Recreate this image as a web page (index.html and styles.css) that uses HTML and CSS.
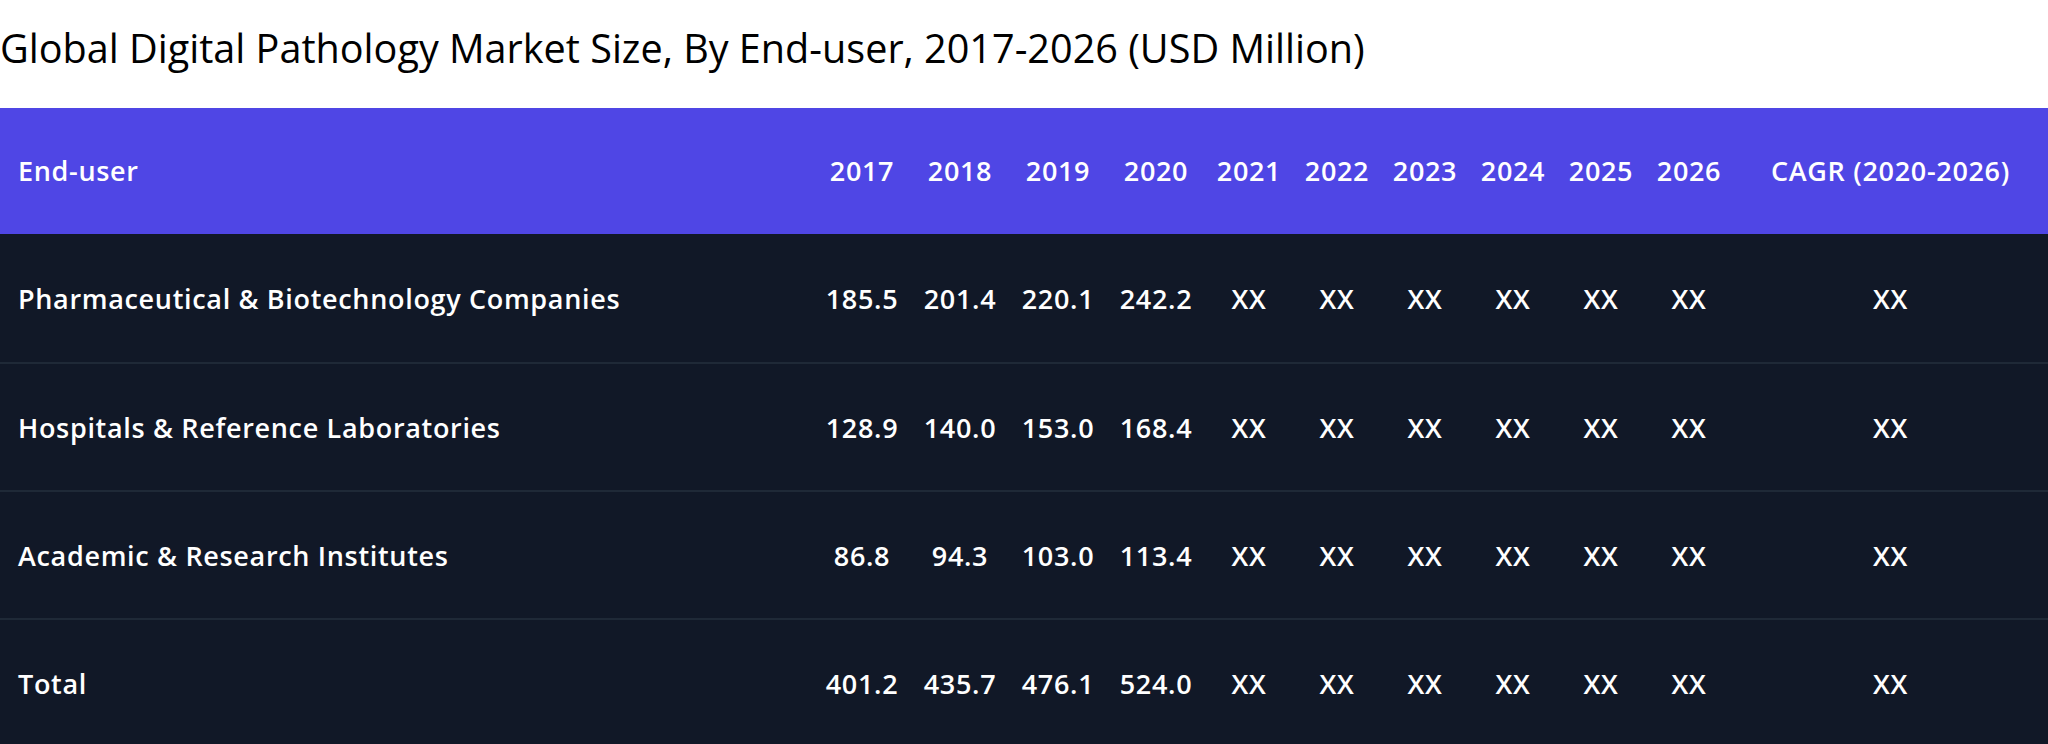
FILE: index.html
```html
<!DOCTYPE html>
<html lang="en">
<head>
<meta charset="utf-8">
<title>Global Digital Pathology Market Size</title>
<link rel="stylesheet" href="styles.css">
</head>
<body>
<h1 class="title">Global Digital Pathology Market Size, By End-user, 2017-2026 (USD Million)</h1>
<div class="table">
  <div class="row head">
    <div class="cell label">End-user</div>
    <div class="cell">2017</div><div class="cell">2018</div><div class="cell">2019</div><div class="cell">2020</div>
    <div class="cell">2021</div><div class="cell">2022</div><div class="cell">2023</div><div class="cell">2024</div><div class="cell">2025</div><div class="cell">2026</div>
    <div class="cell">CAGR (2020-2026)</div>
  </div>
  <div class="body">
    <div class="row">
      <div class="cell label">Pharmaceutical &amp; Biotechnology Companies</div>
      <div class="cell">185.5</div><div class="cell">201.4</div><div class="cell">220.1</div><div class="cell">242.2</div>
      <div class="cell">XX</div><div class="cell">XX</div><div class="cell">XX</div><div class="cell">XX</div><div class="cell">XX</div><div class="cell">XX</div>
      <div class="cell">XX</div>
    </div>
    <div class="row">
      <div class="cell label">Hospitals &amp; Reference Laboratories</div>
      <div class="cell">128.9</div><div class="cell">140.0</div><div class="cell">153.0</div><div class="cell">168.4</div>
      <div class="cell">XX</div><div class="cell">XX</div><div class="cell">XX</div><div class="cell">XX</div><div class="cell">XX</div><div class="cell">XX</div>
      <div class="cell">XX</div>
    </div>
    <div class="row">
      <div class="cell label">Academic &amp; Research Institutes</div>
      <div class="cell">86.8</div><div class="cell">94.3</div><div class="cell">103.0</div><div class="cell">113.4</div>
      <div class="cell">XX</div><div class="cell">XX</div><div class="cell">XX</div><div class="cell">XX</div><div class="cell">XX</div><div class="cell">XX</div>
      <div class="cell">XX</div>
    </div>
    <div class="row">
      <div class="cell label">Total</div>
      <div class="cell">401.2</div><div class="cell">435.7</div><div class="cell">476.1</div><div class="cell">524.0</div>
      <div class="cell">XX</div><div class="cell">XX</div><div class="cell">XX</div><div class="cell">XX</div><div class="cell">XX</div><div class="cell">XX</div>
      <div class="cell">XX</div>
    </div>
  </div>
</div>
</body>
</html>
```

FILE: styles.css
```css
html, body {
  margin: 0;
  padding: 0;
  overflow: hidden;
  background: #ffffff;
}

body {
  font-family: "Open Sans", "Noto Sans", sans-serif;
}

.title {
  margin: 0 0 32px;
  padding-top: 20px;
  font-size: 39.6px;
  line-height: 56px;
  font-weight: 400;
  color: #000000;
}

.table {
  background: #111827;
  color: #ffffff;
}

.row {
  display: grid;
  grid-template-columns: 1fr repeat(4, 98px) repeat(6, 88px) 315px;
  align-items: center;
  height: 128px;
  box-sizing: border-box;
  font-size: 27px;
  font-weight: 600;
  letter-spacing: 0.025em;
}

.head {
  height: 126px;
  padding-bottom: 2px;
  background: #4f46e5;
}

.body .row + .row {
  border-top: 2px solid #1f2937;
}

.cell {
  text-align: center;
  white-space: nowrap;
}

.cell.label {
  text-align: left;
  padding-left: 18px;
}
```
